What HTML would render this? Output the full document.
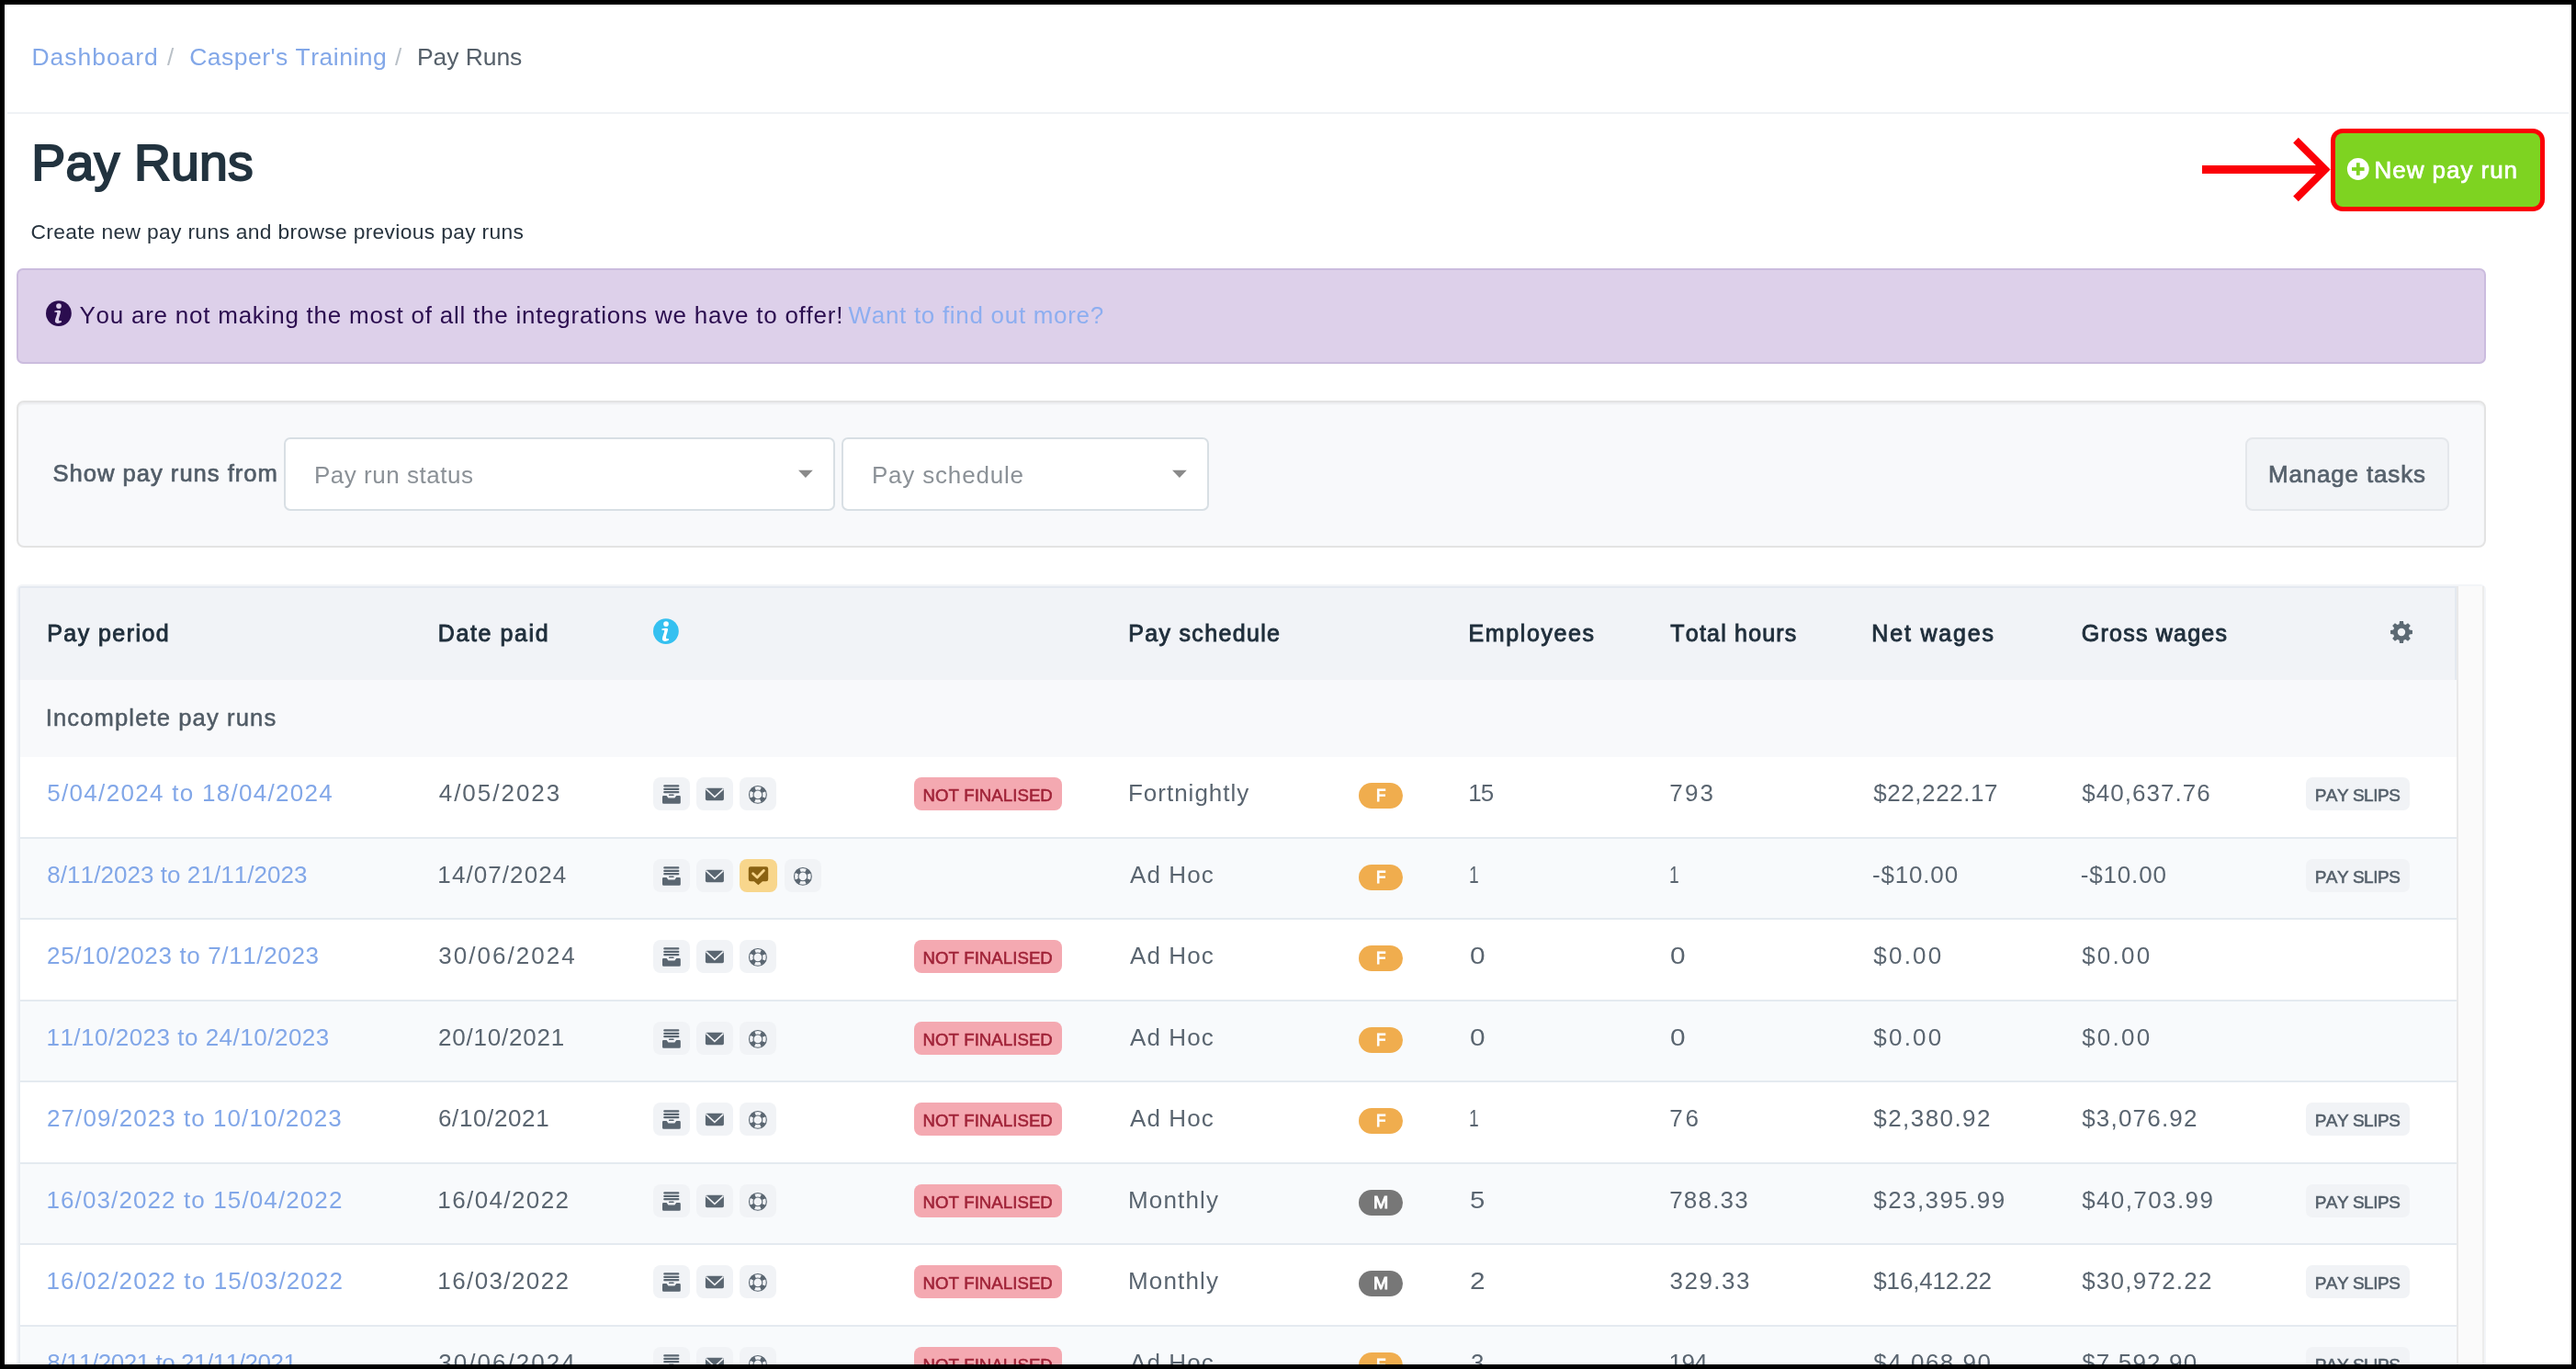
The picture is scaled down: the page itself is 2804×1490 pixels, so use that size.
<!DOCTYPE html>
<html lang="en">
<head>
<meta charset="utf-8">
<title>Pay Runs</title>
<style>
html,body{margin:0;padding:0;}
body{width:2804px;height:1490px;background:#000;overflow:hidden;position:relative;font-family:"Liberation Sans",Arial,sans-serif;}
#page{position:absolute;left:5px;top:5px;width:2794px;height:1480px;background:#fff;overflow:hidden;}
#c{position:absolute;left:-5px;top:-5px;width:2804px;height:1490px;will-change:transform;}
.b{position:absolute;display:block;}
.t{position:absolute;display:block;white-space:pre;line-height:1;font-kerning:none;font-variant-ligatures:none;transform-origin:0 50%;}
</style>
</head>
<body>
<div id="page"><div id="c">
<span class="t " style="left:34.48px;top:48.57px;font-size:26.5px;color:#82a7e8;letter-spacing:0.965px;">Dashboard</span>
<span class="t " style="left:181.70px;top:48.57px;font-size:26.5px;color:#b9c0c7;transform:scaleX(0.9838);">/</span>
<span class="t " style="left:206.18px;top:48.57px;font-size:26.5px;color:#82a7e8;letter-spacing:0.482px;">Casper&#x27;s Training</span>
<span class="t " style="left:430.00px;top:48.57px;font-size:26.5px;color:#b9c0c7;transform:scaleX(0.9838);">/</span>
<span class="t " style="left:453.88px;top:48.57px;font-size:26.5px;color:#56606a;letter-spacing:-0.066px;">Pay Runs</span>
<div class="b" style="left:8px;top:122px;width:2788px;height:2px;background:#eff2f5;"></div>
<span class="t " style="left:34.37px;top:149.80px;font-size:55.4px;color:#22333f;letter-spacing:0.179px;-webkit-text-stroke:2.0px #22333f;">Pay Runs</span>
<span class="t " style="left:33.46px;top:240.70px;font-size:22.8px;color:#27333e;letter-spacing:0.333px;">Create new pay runs and browse previous pay runs</span>
<svg class="b" style="left:2380px;top:130px" width="170" height="110" viewBox="2380 130 170 110"><rect x="2397" y="180" width="134" height="9" fill="#fb0007"/><polyline points="2499,152.6 2531,184.5 2499,216.4" fill="none" stroke="#fb0007" stroke-width="8" stroke-linejoin="miter" stroke-miterlimit="10"/></svg>
<div class="b" style="left:2537px;top:140px;width:233px;height:90px;background:#fb0007;border-radius:13px;"></div>
<div class="b" style="left:2542px;top:145px;width:223px;height:80px;background:#7ed321;border-radius:8px;"></div>
<svg class="b" style="left:2554px;top:171px" width="26" height="26" viewBox="0 0 26 26"><circle cx="12.8" cy="13" r="11.9" fill="#fff"/><rect x="6" y="11.1" width="13.6" height="3.8" fill="#7ed321"/><rect x="10.9" y="6.2" width="3.8" height="13.6" fill="#7ed321"/></svg>
<span class="t " style="left:2584.57px;top:172.29px;font-size:26px;color:#ffffff;letter-spacing:0.951px;-webkit-text-stroke:0.7px #ffffff;">New pay run</span>
<div class="b" style="left:18px;top:292px;width:2688px;height:104px;background:#ddd0ea;border:2px solid #cbbcde;border-radius:7px;box-sizing:border-box;"></div>
<svg class="b" style="left:49.10px;top:327.10px" width="30" height="30" viewBox="0 0 30 30"><circle cx="14.9" cy="14.1" r="13.9" fill="#2b0d4f"/><circle cx="15" cy="6.1" r="2.85" fill="#ddd0ea"/><path d="M10.3 11.4 C12.5 10.6 16.5 10.2 17 11.6 C17.4 13.2 14.8 19.5 15 21.2 C15.2 22.6 16.6 22.4 17.6 22 L18.2 23.4 C16.4 24.8 12 26 11 23.2 C10.4 21.2 13.4 15.2 13.2 13.6 C13.1 12.6 11.6 12.7 10.6 12.9 Z" fill="#ddd0ea"/></svg>
<span class="t " style="left:86.38px;top:329.99px;font-size:26px;color:#2b0d4f;letter-spacing:0.766px;">You are not making the most of all the integrations we have to offer!</span>
<span class="t " style="left:923.53px;top:329.99px;font-size:26px;color:#8daef0;letter-spacing:0.700px;">Want to find out more?</span>
<div class="b" style="left:18px;top:436px;width:2688px;height:160px;background:#f8f9fb;border:2px solid #e3e3e3;border-radius:8px;box-sizing:border-box;box-shadow:inset 0 2px 2px rgba(0,0,0,.05);"></div>
<span class="t " style="left:57.40px;top:503.33px;font-size:25.6px;color:#525d68;letter-spacing:0.996px;-webkit-text-stroke:0.7px #525d68;">Show pay runs from</span>
<div class="b" style="left:309px;top:476px;width:600px;height:80px;background:#fff;border:2px solid #d8dfe4;border-radius:7px;box-sizing:border-box;"></div>
<span class="t " style="left:341.92px;top:503.99px;font-size:26px;color:#8b9197;letter-spacing:0.537px;">Pay run status</span>
<svg class="b" style="left:868px;top:511px" width="18" height="10" viewBox="0 0 18 10"><path d="M1 0.8 L16.8 0.8 L8.9 9 Z" fill="#8a8a8a"/></svg>
<div class="b" style="left:916px;top:476px;width:400px;height:80px;background:#fff;border:2px solid #d8dfe4;border-radius:7px;box-sizing:border-box;"></div>
<span class="t " style="left:948.92px;top:503.99px;font-size:26px;color:#8b9197;letter-spacing:0.823px;">Pay schedule</span>
<svg class="b" style="left:1275px;top:511px" width="18" height="10" viewBox="0 0 18 10"><path d="M1 0.8 L16.8 0.8 L8.9 9 Z" fill="#8a8a8a"/></svg>
<div class="b" style="left:2444px;top:476px;width:222px;height:80px;background:#f2f4f7;border:2px solid #e4e7eb;border-radius:8px;box-sizing:border-box;"></div>
<span class="t " style="left:2468.97px;top:502.99px;font-size:26px;color:#56616c;letter-spacing:0.830px;-webkit-text-stroke:0.7px #56616c;">Manage tasks</span>
<div class="b" style="left:18px;top:636px;width:2688px;height:860px;background:#fff;border:2px solid #f3f5f8;border-radius:6px;box-sizing:border-box;"></div>
<div class="b" style="left:2674px;top:638px;width:30px;height:860px;background:#fafafa;border-left:2px solid #e9e9e9;border-right:2px solid #ececec;box-sizing:border-box;"></div>
<div class="b" style="left:20px;top:638px;width:2654px;height:102px;background:#f1f3f7;border-top:2px solid #e4e9f0;border-left:2px solid #e4e9f0;border-right:2px solid #e4e9f0;box-sizing:border-box;border-radius:3px 0 0 0;"></div>
<div class="b" style="left:20px;top:740px;width:2654px;height:84px;background:#f8f9fb;border-left:2px solid #e9edf2;box-sizing:border-box;"></div>
<span class="t " style="left:51.15px;top:676.94px;font-size:25px;color:#1f2e3b;letter-spacing:1.454px;-webkit-text-stroke:0.9px #1f2e3b;">Pay period</span>
<span class="t " style="left:476.75px;top:676.94px;font-size:25px;color:#1f2e3b;letter-spacing:1.611px;-webkit-text-stroke:0.9px #1f2e3b;">Date paid</span>
<span class="t " style="left:1228.15px;top:676.94px;font-size:25px;color:#1f2e3b;letter-spacing:1.339px;-webkit-text-stroke:0.9px #1f2e3b;">Pay schedule</span>
<span class="t " style="left:1598.45px;top:676.94px;font-size:25px;color:#1f2e3b;letter-spacing:1.627px;-webkit-text-stroke:0.9px #1f2e3b;">Employees</span>
<span class="t " style="left:1818.35px;top:676.94px;font-size:25px;color:#1f2e3b;letter-spacing:1.196px;-webkit-text-stroke:0.9px #1f2e3b;">Total hours</span>
<span class="t " style="left:2037.25px;top:676.94px;font-size:25px;color:#1f2e3b;letter-spacing:1.834px;-webkit-text-stroke:0.9px #1f2e3b;">Net wages</span>
<span class="t " style="left:2265.80px;top:676.94px;font-size:25px;color:#1f2e3b;letter-spacing:1.228px;-webkit-text-stroke:0.9px #1f2e3b;">Gross wages</span>
<svg class="b" style="left:710.00px;top:673.00px" width="30" height="30" viewBox="0 0 30 30"><circle cx="14.9" cy="14.1" r="13.9" fill="#35c0f0"/><circle cx="15" cy="6.1" r="2.85" fill="#ffffff"/><path d="M10.3 11.4 C12.5 10.6 16.5 10.2 17 11.6 C17.4 13.2 14.8 19.5 15 21.2 C15.2 22.6 16.6 22.4 17.6 22 L18.2 23.4 C16.4 24.8 12 26 11 23.2 C10.4 21.2 13.4 15.2 13.2 13.6 C13.1 12.6 11.6 12.7 10.6 12.9 Z" fill="#ffffff"/></svg>
<svg class="b" style="left:2600px;top:674px" width="28" height="28" viewBox="2600 674 28 28"><path fill-rule="evenodd" fill="#5c6973" d="M2611.56 679.23 L2612.01 676.06 L2615.99 676.06 L2616.44 679.23 L2618.48 680.08 L2621.04 678.16 L2623.84 680.96 L2621.92 683.52 L2622.77 685.56 L2625.94 686.01 L2625.94 689.99 L2622.77 690.44 L2621.92 692.48 L2623.84 695.04 L2621.04 697.84 L2618.48 695.92 L2616.44 696.77 L2615.99 699.94 L2612.01 699.94 L2611.56 696.77 L2609.52 695.92 L2606.96 697.84 L2604.16 695.04 L2606.08 692.48 L2605.23 690.44 L2602.06 689.99 L2602.06 686.01 L2605.23 685.56 L2606.08 683.52 L2604.16 680.96 L2606.96 678.16 L2609.52 680.08 Z M2618.20 688.00 A4.2 4.2 0 1 0 2609.80 688.00 A4.2 4.2 0 1 0 2618.20 688.00 Z"/></svg>
<span class="t " style="left:49.75px;top:768.63px;font-size:25.6px;color:#505b65;letter-spacing:1.111px;-webkit-text-stroke:0.5px #505b65;">Incomplete pay runs</span>
<div class="b" style="left:20px;top:824px;width:2654px;height:90px;background:#ffffff;border-left:2px solid #e9edf2;box-sizing:border-box;"></div>
<span class="t " style="left:51.36px;top:850.49px;font-size:26px;color:#82a7e8;letter-spacing:1.290px;">5/04/2024 to 18/04/2024</span>
<span class="t " style="left:477.72px;top:850.49px;font-size:26px;color:#5a6570;letter-spacing:1.981px;">4/05/2023</span>
<svg class="b" style="left:711px;top:846px" width="40" height="36" viewBox="0 0 40 36"><rect width="40" height="36" rx="8" fill="#f1f3f6"/><g fill="#5a6671"><rect x="11.2" y="8.3" width="17.2" height="2.3" rx="1.1"/><rect x="11.2" y="11.7" width="17.2" height="2.3" rx="1.1"/><rect x="11.2" y="15" width="17.2" height="2.3" rx="1.1"/><rect x="17" y="18.6" width="5.6" height="1.5" rx="0.7"/><path d="M10 21.2 Q10 20 11.2 20 L14.6 20 L16.4 22.4 L23.4 22.4 L25.2 20 L28.6 20 Q29.8 20 29.8 21.2 L29.8 27.4 Q29.8 28.8 28.4 28.8 L11.4 28.8 Q10 28.8 10 27.4 Z"/></g></svg>
<svg class="b" style="left:758px;top:846px" width="40" height="36" viewBox="0 0 40 36"><rect width="40" height="36" rx="8" fill="#f1f3f6"/><rect x="9.9" y="11.8" width="20" height="13.4" rx="1.6" fill="#5a6671"/><polyline points="10.4,12.6 19.9,21.4 29.4,12.6" fill="none" stroke="#f1f3f6" stroke-width="1.5"/></svg>
<svg class="b" style="left:805px;top:846px" width="40" height="36" viewBox="0 0 40 36"><rect width="40" height="36" rx="8" fill="#f1f3f6"/><circle cx="19.9" cy="18.9" r="9.4" fill="none" stroke="#5a6671" stroke-width="1.1"/><circle cx="19.9" cy="18.9" r="4.9" fill="none" stroke="#5a6671" stroke-width="1.1"/><circle cx="19.9" cy="18.9" r="7.1" fill="none" stroke="#5a6671" stroke-width="4.6" stroke-dasharray="5.019 6.134" stroke-dashoffset="-3.067"/></svg>
<div class="b" style="left:995px;top:846px;width:161px;height:36px;background:#f4a9b1;border-radius:8px;"></div>
<span class="t " style="left:1004.59px;top:857.16px;font-size:18.6px;color:#a02338;letter-spacing:0.058px;-webkit-text-stroke:0.55px #a02338;">NOT FINALISED</span>
<span class="t " style="left:1227.92px;top:850.49px;font-size:26px;color:#5a6570;letter-spacing:1.006px;">Fortnightly</span>
<div class="b" style="left:1479px;top:852px;width:48px;height:28px;background:#f0ad4e;border-radius:14px;"></div>
<span class="t " style="left:1497.78px;top:856.12px;font-size:19px;color:#fff;transform:scaleX(0.8979);-webkit-text-stroke:1.0px #fff;">F</span>
<span class="t " style="left:1598.35px;top:850.49px;font-size:26px;color:#5a6570;letter-spacing:-1.170px;">15</span>
<span class="t " style="left:1817.20px;top:850.49px;font-size:26px;color:#5a6570;letter-spacing:2.258px;">793</span>
<span class="t " style="left:2039.34px;top:850.49px;font-size:26px;color:#5a6570;letter-spacing:0.547px;">$22,222.17</span>
<span class="t " style="left:2266.14px;top:850.49px;font-size:26px;color:#5a6570;letter-spacing:1.044px;">$40,637.76</span>
<div class="b" style="left:2510px;top:846px;width:113px;height:36px;background:#f1f3f6;border-radius:7px;"></div>
<span class="t " style="left:2519.66px;top:855.92px;font-size:19px;color:#55606b;letter-spacing:-0.502px;-webkit-text-stroke:0.55px #55606b;">PAY SLIPS</span>
<div class="b" style="left:20px;top:912px;width:2654px;height:90px;background:#f8fafc;border-left:2px solid #e9edf2;box-sizing:border-box;"></div>
<div class="b" style="left:22px;top:911px;width:2652px;height:2px;background:#e4eaf0;"></div>
<span class="t " style="left:51.30px;top:938.94px;font-size:26px;color:#82a7e8;letter-spacing:0.059px;">8/11/2023 to 21/11/2023</span>
<span class="t " style="left:476.35px;top:938.94px;font-size:26px;color:#5a6570;letter-spacing:1.077px;">14/07/2024</span>
<svg class="b" style="left:711px;top:935px" width="40" height="36" viewBox="0 0 40 36"><rect width="40" height="36" rx="8" fill="#f1f3f6"/><g fill="#5a6671"><rect x="11.2" y="8.3" width="17.2" height="2.3" rx="1.1"/><rect x="11.2" y="11.7" width="17.2" height="2.3" rx="1.1"/><rect x="11.2" y="15" width="17.2" height="2.3" rx="1.1"/><rect x="17" y="18.6" width="5.6" height="1.5" rx="0.7"/><path d="M10 21.2 Q10 20 11.2 20 L14.6 20 L16.4 22.4 L23.4 22.4 L25.2 20 L28.6 20 Q29.8 20 29.8 21.2 L29.8 27.4 Q29.8 28.8 28.4 28.8 L11.4 28.8 Q10 28.8 10 27.4 Z"/></g></svg>
<svg class="b" style="left:758px;top:935px" width="40" height="36" viewBox="0 0 40 36"><rect width="40" height="36" rx="8" fill="#f1f3f6"/><rect x="9.9" y="11.8" width="20" height="13.4" rx="1.6" fill="#5a6671"/><polyline points="10.4,12.6 19.9,21.4 29.4,12.6" fill="none" stroke="#f1f3f6" stroke-width="1.5"/></svg>
<svg class="b" style="left:805px;top:935px" width="41" height="36" viewBox="0 0 41 36"><rect width="41" height="36" rx="8" fill="#f8d68c"/><path d="M12 8.2 L29 8.2 Q31.2 8.2 31.2 10.4 L31.2 22 Q31.2 24.2 29 24.2 L25 24.2 L20.4 28.2 L15.8 24.2 L12 24.2 Q9.8 24.2 9.8 22 L9.8 10.4 Q9.8 8.2 12 8.2 Z" fill="#8a6212"/><polyline points="14.6,15.8 19.2,20 26.4,12.6" fill="none" stroke="#f8d68c" stroke-width="2.8" stroke-linecap="round" stroke-linejoin="round"/></svg>
<svg class="b" style="left:854px;top:935px" width="40" height="36" viewBox="0 0 40 36"><rect width="40" height="36" rx="8" fill="#f1f3f6"/><circle cx="19.9" cy="18.9" r="9.4" fill="none" stroke="#5a6671" stroke-width="1.1"/><circle cx="19.9" cy="18.9" r="4.9" fill="none" stroke="#5a6671" stroke-width="1.1"/><circle cx="19.9" cy="18.9" r="7.1" fill="none" stroke="#5a6671" stroke-width="4.6" stroke-dasharray="5.019 6.134" stroke-dashoffset="-3.067"/></svg>
<span class="t " style="left:1230.00px;top:938.94px;font-size:26px;color:#5a6570;letter-spacing:1.087px;">Ad Hoc</span>
<div class="b" style="left:1479px;top:941px;width:48px;height:28px;background:#f0ad4e;border-radius:14px;"></div>
<span class="t " style="left:1497.78px;top:945.12px;font-size:19px;color:#fff;transform:scaleX(0.8979);-webkit-text-stroke:1.0px #fff;">F</span>
<span class="t " style="left:1599.26px;top:938.94px;font-size:26px;color:#5a6570;transform:scaleX(0.7381);">1</span>
<span class="t " style="left:1817.26px;top:938.94px;font-size:26px;color:#5a6570;transform:scaleX(0.7381);">1</span>
<span class="t " style="left:2037.89px;top:938.94px;font-size:26px;color:#5a6570;letter-spacing:0.845px;">-$10.00</span>
<span class="t " style="left:2264.70px;top:938.94px;font-size:26px;color:#5a6570;letter-spacing:0.845px;">-$10.00</span>
<div class="b" style="left:2510px;top:935px;width:113px;height:36px;background:#f1f3f6;border-radius:7px;"></div>
<span class="t " style="left:2519.66px;top:944.92px;font-size:19px;color:#55606b;letter-spacing:-0.502px;-webkit-text-stroke:0.55px #55606b;">PAY SLIPS</span>
<div class="b" style="left:20px;top:1000px;width:2654px;height:90px;background:#ffffff;border-left:2px solid #e9edf2;box-sizing:border-box;"></div>
<div class="b" style="left:22px;top:999px;width:2652px;height:2px;background:#e4eaf0;"></div>
<span class="t " style="left:51.10px;top:1027.39px;font-size:26px;color:#82a7e8;letter-spacing:0.633px;">25/10/2023 to 7/11/2023</span>
<span class="t " style="left:477.32px;top:1027.39px;font-size:26px;color:#5a6570;letter-spacing:2.036px;">30/06/2024</span>
<svg class="b" style="left:711px;top:1023px" width="40" height="36" viewBox="0 0 40 36"><rect width="40" height="36" rx="8" fill="#f1f3f6"/><g fill="#5a6671"><rect x="11.2" y="8.3" width="17.2" height="2.3" rx="1.1"/><rect x="11.2" y="11.7" width="17.2" height="2.3" rx="1.1"/><rect x="11.2" y="15" width="17.2" height="2.3" rx="1.1"/><rect x="17" y="18.6" width="5.6" height="1.5" rx="0.7"/><path d="M10 21.2 Q10 20 11.2 20 L14.6 20 L16.4 22.4 L23.4 22.4 L25.2 20 L28.6 20 Q29.8 20 29.8 21.2 L29.8 27.4 Q29.8 28.8 28.4 28.8 L11.4 28.8 Q10 28.8 10 27.4 Z"/></g></svg>
<svg class="b" style="left:758px;top:1023px" width="40" height="36" viewBox="0 0 40 36"><rect width="40" height="36" rx="8" fill="#f1f3f6"/><rect x="9.9" y="11.8" width="20" height="13.4" rx="1.6" fill="#5a6671"/><polyline points="10.4,12.6 19.9,21.4 29.4,12.6" fill="none" stroke="#f1f3f6" stroke-width="1.5"/></svg>
<svg class="b" style="left:805px;top:1023px" width="40" height="36" viewBox="0 0 40 36"><rect width="40" height="36" rx="8" fill="#f1f3f6"/><circle cx="19.9" cy="18.9" r="9.4" fill="none" stroke="#5a6671" stroke-width="1.1"/><circle cx="19.9" cy="18.9" r="4.9" fill="none" stroke="#5a6671" stroke-width="1.1"/><circle cx="19.9" cy="18.9" r="7.1" fill="none" stroke="#5a6671" stroke-width="4.6" stroke-dasharray="5.019 6.134" stroke-dashoffset="-3.067"/></svg>
<div class="b" style="left:995px;top:1023px;width:161px;height:36px;background:#f4a9b1;border-radius:8px;"></div>
<span class="t " style="left:1004.59px;top:1034.16px;font-size:18.6px;color:#a02338;letter-spacing:0.058px;-webkit-text-stroke:0.55px #a02338;">NOT FINALISED</span>
<span class="t " style="left:1230.00px;top:1027.39px;font-size:26px;color:#5a6570;letter-spacing:1.087px;">Ad Hoc</span>
<div class="b" style="left:1479px;top:1029px;width:48px;height:28px;background:#f0ad4e;border-radius:14px;"></div>
<span class="t " style="left:1497.78px;top:1033.12px;font-size:19px;color:#fff;transform:scaleX(0.8979);-webkit-text-stroke:1.0px #fff;">F</span>
<span class="t " style="left:1599.98px;top:1027.39px;font-size:26px;color:#5a6570;transform:scaleX(1.1458);">0</span>
<span class="t " style="left:1817.98px;top:1027.39px;font-size:26px;color:#5a6570;transform:scaleX(1.1458);">0</span>
<span class="t " style="left:2039.34px;top:1027.39px;font-size:26px;color:#5a6570;letter-spacing:2.200px;">$0.00</span>
<span class="t " style="left:2266.14px;top:1027.39px;font-size:26px;color:#5a6570;letter-spacing:2.225px;">$0.00</span>
<div class="b" style="left:20px;top:1089px;width:2654px;height:90px;background:#f8fafc;border-left:2px solid #e9edf2;box-sizing:border-box;"></div>
<div class="b" style="left:22px;top:1088px;width:2652px;height:2px;background:#e4eaf0;"></div>
<span class="t " style="left:50.45px;top:1115.84px;font-size:26px;color:#82a7e8;letter-spacing:0.497px;">11/10/2023 to 24/10/2023</span>
<span class="t " style="left:477.00px;top:1115.84px;font-size:26px;color:#5a6570;letter-spacing:0.796px;">20/10/2021</span>
<svg class="b" style="left:711px;top:1112px" width="40" height="36" viewBox="0 0 40 36"><rect width="40" height="36" rx="8" fill="#f1f3f6"/><g fill="#5a6671"><rect x="11.2" y="8.3" width="17.2" height="2.3" rx="1.1"/><rect x="11.2" y="11.7" width="17.2" height="2.3" rx="1.1"/><rect x="11.2" y="15" width="17.2" height="2.3" rx="1.1"/><rect x="17" y="18.6" width="5.6" height="1.5" rx="0.7"/><path d="M10 21.2 Q10 20 11.2 20 L14.6 20 L16.4 22.4 L23.4 22.4 L25.2 20 L28.6 20 Q29.8 20 29.8 21.2 L29.8 27.4 Q29.8 28.8 28.4 28.8 L11.4 28.8 Q10 28.8 10 27.4 Z"/></g></svg>
<svg class="b" style="left:758px;top:1112px" width="40" height="36" viewBox="0 0 40 36"><rect width="40" height="36" rx="8" fill="#f1f3f6"/><rect x="9.9" y="11.8" width="20" height="13.4" rx="1.6" fill="#5a6671"/><polyline points="10.4,12.6 19.9,21.4 29.4,12.6" fill="none" stroke="#f1f3f6" stroke-width="1.5"/></svg>
<svg class="b" style="left:805px;top:1112px" width="40" height="36" viewBox="0 0 40 36"><rect width="40" height="36" rx="8" fill="#f1f3f6"/><circle cx="19.9" cy="18.9" r="9.4" fill="none" stroke="#5a6671" stroke-width="1.1"/><circle cx="19.9" cy="18.9" r="4.9" fill="none" stroke="#5a6671" stroke-width="1.1"/><circle cx="19.9" cy="18.9" r="7.1" fill="none" stroke="#5a6671" stroke-width="4.6" stroke-dasharray="5.019 6.134" stroke-dashoffset="-3.067"/></svg>
<div class="b" style="left:995px;top:1112px;width:161px;height:36px;background:#f4a9b1;border-radius:8px;"></div>
<span class="t " style="left:1004.59px;top:1123.16px;font-size:18.6px;color:#a02338;letter-spacing:0.058px;-webkit-text-stroke:0.55px #a02338;">NOT FINALISED</span>
<span class="t " style="left:1230.00px;top:1115.84px;font-size:26px;color:#5a6570;letter-spacing:1.087px;">Ad Hoc</span>
<div class="b" style="left:1479px;top:1118px;width:48px;height:28px;background:#f0ad4e;border-radius:14px;"></div>
<span class="t " style="left:1497.78px;top:1122.12px;font-size:19px;color:#fff;transform:scaleX(0.8979);-webkit-text-stroke:1.0px #fff;">F</span>
<span class="t " style="left:1599.98px;top:1115.84px;font-size:26px;color:#5a6570;transform:scaleX(1.1458);">0</span>
<span class="t " style="left:1817.98px;top:1115.84px;font-size:26px;color:#5a6570;transform:scaleX(1.1458);">0</span>
<span class="t " style="left:2039.34px;top:1115.84px;font-size:26px;color:#5a6570;letter-spacing:2.200px;">$0.00</span>
<span class="t " style="left:2266.14px;top:1115.84px;font-size:26px;color:#5a6570;letter-spacing:2.225px;">$0.00</span>
<div class="b" style="left:20px;top:1177px;width:2654px;height:90px;background:#ffffff;border-left:2px solid #e9edf2;box-sizing:border-box;"></div>
<div class="b" style="left:22px;top:1176px;width:2652px;height:2px;background:#e4eaf0;"></div>
<span class="t " style="left:51.10px;top:1204.29px;font-size:26px;color:#82a7e8;letter-spacing:1.052px;">27/09/2023 to 10/10/2023</span>
<span class="t " style="left:477.00px;top:1204.29px;font-size:26px;color:#5a6570;letter-spacing:0.624px;">6/10/2021</span>
<svg class="b" style="left:711px;top:1200px" width="40" height="36" viewBox="0 0 40 36"><rect width="40" height="36" rx="8" fill="#f1f3f6"/><g fill="#5a6671"><rect x="11.2" y="8.3" width="17.2" height="2.3" rx="1.1"/><rect x="11.2" y="11.7" width="17.2" height="2.3" rx="1.1"/><rect x="11.2" y="15" width="17.2" height="2.3" rx="1.1"/><rect x="17" y="18.6" width="5.6" height="1.5" rx="0.7"/><path d="M10 21.2 Q10 20 11.2 20 L14.6 20 L16.4 22.4 L23.4 22.4 L25.2 20 L28.6 20 Q29.8 20 29.8 21.2 L29.8 27.4 Q29.8 28.8 28.4 28.8 L11.4 28.8 Q10 28.8 10 27.4 Z"/></g></svg>
<svg class="b" style="left:758px;top:1200px" width="40" height="36" viewBox="0 0 40 36"><rect width="40" height="36" rx="8" fill="#f1f3f6"/><rect x="9.9" y="11.8" width="20" height="13.4" rx="1.6" fill="#5a6671"/><polyline points="10.4,12.6 19.9,21.4 29.4,12.6" fill="none" stroke="#f1f3f6" stroke-width="1.5"/></svg>
<svg class="b" style="left:805px;top:1200px" width="40" height="36" viewBox="0 0 40 36"><rect width="40" height="36" rx="8" fill="#f1f3f6"/><circle cx="19.9" cy="18.9" r="9.4" fill="none" stroke="#5a6671" stroke-width="1.1"/><circle cx="19.9" cy="18.9" r="4.9" fill="none" stroke="#5a6671" stroke-width="1.1"/><circle cx="19.9" cy="18.9" r="7.1" fill="none" stroke="#5a6671" stroke-width="4.6" stroke-dasharray="5.019 6.134" stroke-dashoffset="-3.067"/></svg>
<div class="b" style="left:995px;top:1200px;width:161px;height:36px;background:#f4a9b1;border-radius:8px;"></div>
<span class="t " style="left:1004.59px;top:1211.16px;font-size:18.6px;color:#a02338;letter-spacing:0.058px;-webkit-text-stroke:0.55px #a02338;">NOT FINALISED</span>
<span class="t " style="left:1230.00px;top:1204.29px;font-size:26px;color:#5a6570;letter-spacing:1.087px;">Ad Hoc</span>
<div class="b" style="left:1479px;top:1206px;width:48px;height:28px;background:#f0ad4e;border-radius:14px;"></div>
<span class="t " style="left:1497.78px;top:1210.12px;font-size:19px;color:#fff;transform:scaleX(0.8979);-webkit-text-stroke:1.0px #fff;">F</span>
<span class="t " style="left:1599.26px;top:1204.29px;font-size:26px;color:#5a6570;transform:scaleX(0.7381);">1</span>
<span class="t " style="left:1817.20px;top:1204.29px;font-size:26px;color:#5a6570;letter-spacing:2.945px;">76</span>
<span class="t " style="left:2039.34px;top:1204.29px;font-size:26px;color:#5a6570;letter-spacing:1.432px;">$2,380.92</span>
<span class="t " style="left:2266.14px;top:1204.29px;font-size:26px;color:#5a6570;letter-spacing:1.207px;">$3,076.92</span>
<div class="b" style="left:2510px;top:1200px;width:113px;height:36px;background:#f1f3f6;border-radius:7px;"></div>
<span class="t " style="left:2519.66px;top:1209.92px;font-size:19px;color:#55606b;letter-spacing:-0.502px;-webkit-text-stroke:0.55px #55606b;">PAY SLIPS</span>
<div class="b" style="left:20px;top:1266px;width:2654px;height:90px;background:#f8fafc;border-left:2px solid #e9edf2;box-sizing:border-box;"></div>
<div class="b" style="left:22px;top:1265px;width:2652px;height:2px;background:#e4eaf0;"></div>
<span class="t " style="left:50.45px;top:1292.74px;font-size:26px;color:#82a7e8;letter-spacing:1.112px;">16/03/2022 to 15/04/2022</span>
<span class="t " style="left:476.35px;top:1292.74px;font-size:26px;color:#5a6570;letter-spacing:1.391px;">16/04/2022</span>
<svg class="b" style="left:711px;top:1289px" width="40" height="36" viewBox="0 0 40 36"><rect width="40" height="36" rx="8" fill="#f1f3f6"/><g fill="#5a6671"><rect x="11.2" y="8.3" width="17.2" height="2.3" rx="1.1"/><rect x="11.2" y="11.7" width="17.2" height="2.3" rx="1.1"/><rect x="11.2" y="15" width="17.2" height="2.3" rx="1.1"/><rect x="17" y="18.6" width="5.6" height="1.5" rx="0.7"/><path d="M10 21.2 Q10 20 11.2 20 L14.6 20 L16.4 22.4 L23.4 22.4 L25.2 20 L28.6 20 Q29.8 20 29.8 21.2 L29.8 27.4 Q29.8 28.8 28.4 28.8 L11.4 28.8 Q10 28.8 10 27.4 Z"/></g></svg>
<svg class="b" style="left:758px;top:1289px" width="40" height="36" viewBox="0 0 40 36"><rect width="40" height="36" rx="8" fill="#f1f3f6"/><rect x="9.9" y="11.8" width="20" height="13.4" rx="1.6" fill="#5a6671"/><polyline points="10.4,12.6 19.9,21.4 29.4,12.6" fill="none" stroke="#f1f3f6" stroke-width="1.5"/></svg>
<svg class="b" style="left:805px;top:1289px" width="40" height="36" viewBox="0 0 40 36"><rect width="40" height="36" rx="8" fill="#f1f3f6"/><circle cx="19.9" cy="18.9" r="9.4" fill="none" stroke="#5a6671" stroke-width="1.1"/><circle cx="19.9" cy="18.9" r="4.9" fill="none" stroke="#5a6671" stroke-width="1.1"/><circle cx="19.9" cy="18.9" r="7.1" fill="none" stroke="#5a6671" stroke-width="4.6" stroke-dasharray="5.019 6.134" stroke-dashoffset="-3.067"/></svg>
<div class="b" style="left:995px;top:1289px;width:161px;height:36px;background:#f4a9b1;border-radius:8px;"></div>
<span class="t " style="left:1004.59px;top:1300.16px;font-size:18.6px;color:#a02338;letter-spacing:0.058px;-webkit-text-stroke:0.55px #a02338;">NOT FINALISED</span>
<span class="t " style="left:1227.92px;top:1292.74px;font-size:26px;color:#5a6570;letter-spacing:1.191px;">Monthly</span>
<div class="b" style="left:1479px;top:1295px;width:48px;height:28px;background:#777777;border-radius:14px;"></div>
<span class="t " style="left:1495.16px;top:1299.02px;font-size:19px;color:#fff;transform:scaleX(1.0234);-webkit-text-stroke:1.0px #fff;">M</span>
<span class="t " style="left:1600.33px;top:1292.74px;font-size:26px;color:#5a6570;transform:scaleX(1.1255);">5</span>
<span class="t " style="left:1817.20px;top:1292.74px;font-size:26px;color:#5a6570;letter-spacing:1.188px;">788.33</span>
<span class="t " style="left:2039.34px;top:1292.74px;font-size:26px;color:#5a6570;letter-spacing:1.407px;">$23,395.99</span>
<span class="t " style="left:2266.14px;top:1292.74px;font-size:26px;color:#5a6570;letter-spacing:1.407px;">$40,703.99</span>
<div class="b" style="left:2510px;top:1289px;width:113px;height:36px;background:#f1f3f6;border-radius:7px;"></div>
<span class="t " style="left:2519.66px;top:1298.92px;font-size:19px;color:#55606b;letter-spacing:-0.502px;-webkit-text-stroke:0.55px #55606b;">PAY SLIPS</span>
<div class="b" style="left:20px;top:1354px;width:2654px;height:90px;background:#ffffff;border-left:2px solid #e9edf2;box-sizing:border-box;"></div>
<div class="b" style="left:22px;top:1353px;width:2652px;height:2px;background:#e4eaf0;"></div>
<span class="t " style="left:50.45px;top:1381.19px;font-size:26px;color:#82a7e8;letter-spacing:1.138px;">16/02/2022 to 15/03/2022</span>
<span class="t " style="left:476.35px;top:1381.19px;font-size:26px;color:#5a6570;letter-spacing:1.391px;">16/03/2022</span>
<svg class="b" style="left:711px;top:1377px" width="40" height="36" viewBox="0 0 40 36"><rect width="40" height="36" rx="8" fill="#f1f3f6"/><g fill="#5a6671"><rect x="11.2" y="8.3" width="17.2" height="2.3" rx="1.1"/><rect x="11.2" y="11.7" width="17.2" height="2.3" rx="1.1"/><rect x="11.2" y="15" width="17.2" height="2.3" rx="1.1"/><rect x="17" y="18.6" width="5.6" height="1.5" rx="0.7"/><path d="M10 21.2 Q10 20 11.2 20 L14.6 20 L16.4 22.4 L23.4 22.4 L25.2 20 L28.6 20 Q29.8 20 29.8 21.2 L29.8 27.4 Q29.8 28.8 28.4 28.8 L11.4 28.8 Q10 28.8 10 27.4 Z"/></g></svg>
<svg class="b" style="left:758px;top:1377px" width="40" height="36" viewBox="0 0 40 36"><rect width="40" height="36" rx="8" fill="#f1f3f6"/><rect x="9.9" y="11.8" width="20" height="13.4" rx="1.6" fill="#5a6671"/><polyline points="10.4,12.6 19.9,21.4 29.4,12.6" fill="none" stroke="#f1f3f6" stroke-width="1.5"/></svg>
<svg class="b" style="left:805px;top:1377px" width="40" height="36" viewBox="0 0 40 36"><rect width="40" height="36" rx="8" fill="#f1f3f6"/><circle cx="19.9" cy="18.9" r="9.4" fill="none" stroke="#5a6671" stroke-width="1.1"/><circle cx="19.9" cy="18.9" r="4.9" fill="none" stroke="#5a6671" stroke-width="1.1"/><circle cx="19.9" cy="18.9" r="7.1" fill="none" stroke="#5a6671" stroke-width="4.6" stroke-dasharray="5.019 6.134" stroke-dashoffset="-3.067"/></svg>
<div class="b" style="left:995px;top:1377px;width:161px;height:36px;background:#f4a9b1;border-radius:8px;"></div>
<span class="t " style="left:1004.59px;top:1388.16px;font-size:18.6px;color:#a02338;letter-spacing:0.058px;-webkit-text-stroke:0.55px #a02338;">NOT FINALISED</span>
<span class="t " style="left:1227.92px;top:1381.19px;font-size:26px;color:#5a6570;letter-spacing:1.191px;">Monthly</span>
<div class="b" style="left:1479px;top:1383px;width:48px;height:28px;background:#777777;border-radius:14px;"></div>
<span class="t " style="left:1495.16px;top:1387.02px;font-size:19px;color:#fff;transform:scaleX(1.0234);-webkit-text-stroke:1.0px #fff;">M</span>
<span class="t " style="left:1599.51px;top:1381.19px;font-size:26px;color:#5a6570;transform:scaleX(1.1433);">2</span>
<span class="t " style="left:1817.53px;top:1381.19px;font-size:26px;color:#5a6570;letter-spacing:1.483px;">329.33</span>
<span class="t " style="left:2039.34px;top:1381.19px;font-size:26px;color:#5a6570;letter-spacing:-0.175px;">$16,412.22</span>
<span class="t " style="left:2266.14px;top:1381.19px;font-size:26px;color:#5a6570;letter-spacing:1.247px;">$30,972.22</span>
<div class="b" style="left:2510px;top:1377px;width:113px;height:36px;background:#f1f3f6;border-radius:7px;"></div>
<span class="t " style="left:2519.66px;top:1386.92px;font-size:19px;color:#55606b;letter-spacing:-0.502px;-webkit-text-stroke:0.55px #55606b;">PAY SLIPS</span>
<div class="b" style="left:20px;top:1443px;width:2654px;height:90px;background:#f8fafc;border-left:2px solid #e9edf2;box-sizing:border-box;"></div>
<div class="b" style="left:22px;top:1442px;width:2652px;height:2px;background:#e4eaf0;"></div>
<span class="t " style="left:51.30px;top:1469.64px;font-size:26px;color:#82a7e8;letter-spacing:-0.467px;">8/11/2021 to 21/11/2021</span>
<span class="t " style="left:477.32px;top:1469.64px;font-size:26px;color:#5a6570;letter-spacing:2.036px;">30/06/2024</span>
<svg class="b" style="left:711px;top:1466px" width="40" height="36" viewBox="0 0 40 36"><rect width="40" height="36" rx="8" fill="#f1f3f6"/><g fill="#5a6671"><rect x="11.2" y="8.3" width="17.2" height="2.3" rx="1.1"/><rect x="11.2" y="11.7" width="17.2" height="2.3" rx="1.1"/><rect x="11.2" y="15" width="17.2" height="2.3" rx="1.1"/><rect x="17" y="18.6" width="5.6" height="1.5" rx="0.7"/><path d="M10 21.2 Q10 20 11.2 20 L14.6 20 L16.4 22.4 L23.4 22.4 L25.2 20 L28.6 20 Q29.8 20 29.8 21.2 L29.8 27.4 Q29.8 28.8 28.4 28.8 L11.4 28.8 Q10 28.8 10 27.4 Z"/></g></svg>
<svg class="b" style="left:758px;top:1466px" width="40" height="36" viewBox="0 0 40 36"><rect width="40" height="36" rx="8" fill="#f1f3f6"/><rect x="9.9" y="11.8" width="20" height="13.4" rx="1.6" fill="#5a6671"/><polyline points="10.4,12.6 19.9,21.4 29.4,12.6" fill="none" stroke="#f1f3f6" stroke-width="1.5"/></svg>
<svg class="b" style="left:805px;top:1466px" width="40" height="36" viewBox="0 0 40 36"><rect width="40" height="36" rx="8" fill="#f1f3f6"/><circle cx="19.9" cy="18.9" r="9.4" fill="none" stroke="#5a6671" stroke-width="1.1"/><circle cx="19.9" cy="18.9" r="4.9" fill="none" stroke="#5a6671" stroke-width="1.1"/><circle cx="19.9" cy="18.9" r="7.1" fill="none" stroke="#5a6671" stroke-width="4.6" stroke-dasharray="5.019 6.134" stroke-dashoffset="-3.067"/></svg>
<div class="b" style="left:995px;top:1466px;width:161px;height:36px;background:#f4a9b1;border-radius:8px;"></div>
<span class="t " style="left:1004.59px;top:1477.16px;font-size:18.6px;color:#a02338;letter-spacing:0.058px;-webkit-text-stroke:0.55px #a02338;">NOT FINALISED</span>
<span class="t " style="left:1230.00px;top:1469.64px;font-size:26px;color:#5a6570;letter-spacing:1.087px;">Ad Hoc</span>
<div class="b" style="left:1479px;top:1472px;width:48px;height:28px;background:#f0ad4e;border-radius:14px;"></div>
<span class="t " style="left:1497.78px;top:1476.12px;font-size:19px;color:#fff;transform:scaleX(0.8979);-webkit-text-stroke:1.0px #fff;">F</span>
<span class="t " style="left:1600.53px;top:1469.64px;font-size:26px;color:#5a6570;transform:scaleX(0.9960);">3</span>
<span class="t " style="left:1816.55px;top:1469.64px;font-size:26px;color:#5a6570;letter-spacing:-0.612px;">194</span>
<span class="t " style="left:2039.34px;top:1469.64px;font-size:26px;color:#5a6570;letter-spacing:1.487px;">$4,068.90</span>
<span class="t " style="left:2266.14px;top:1469.64px;font-size:26px;color:#5a6570;letter-spacing:1.174px;">$7,592.90</span>
<div class="b" style="left:2510px;top:1466px;width:113px;height:36px;background:#f1f3f6;border-radius:7px;"></div>
<span class="t " style="left:2519.66px;top:1475.92px;font-size:19px;color:#55606b;letter-spacing:-0.502px;-webkit-text-stroke:0.55px #55606b;">PAY SLIPS</span>
</div></div>
</body>
</html>
